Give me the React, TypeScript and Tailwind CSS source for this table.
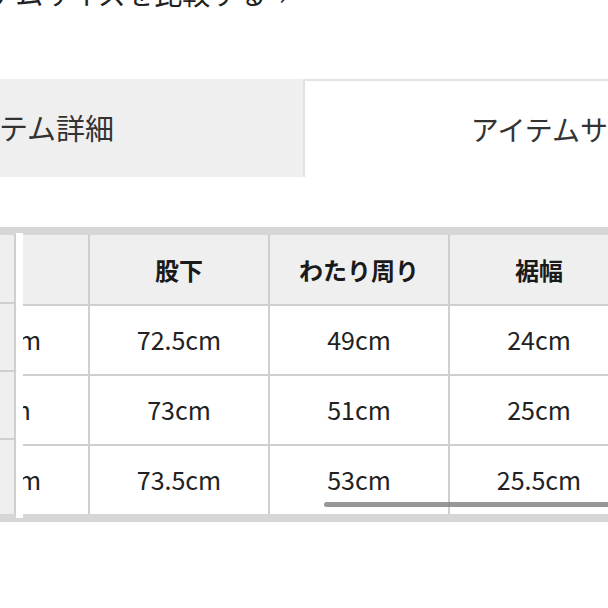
import React from 'react';

const cols = ['股上', '股下', 'わたり周り', '裾幅'];
const rows = [
    ['40.5cm', '72.5cm', '49cm', '24cm'],
    ['41cm', '73cm', '51cm', '25cm'],
    ['42.5cm', '73.5cm', '53cm', '25.5cm'],
];

export default function App() {
    return (
        <div className="w-[608px] h-[608px] overflow-hidden bg-white text-[#222]" style={{ fontFamily: '"Noto Sans CJK JP", "Noto Sans", sans-serif' }}>

            {/* Compare link (cut off at top) */}
            <p className="-mt-[21px] -ml-[66px] h-[28px] text-[28px] leading-[28px] whitespace-nowrap">アイテムサイズを比較する&nbsp;&nbsp;›</p>

            {/* Tabs */}
            <div className="mt-[72px] -ml-[236px] flex w-[1084px] h-[98px] text-[28px] text-[#333]">
                <div className="w-[541px] shrink-0 bg-[#efefef] border-r-2 border-[#e2e2e2] pr-[10px] text-[29px] flex items-center justify-center">アイテム詳細</div>
                <div className="w-[540px] shrink-0 border-t-2 border-[#e4e4e4] pr-[16px] flex items-center justify-center">アイテムサイズ</div>
            </div>

            {/* Size table */}
            <div className="mt-[50px] relative border-y-8 border-[#d6d6d6]">
                <div className="flex">
                    {/* Frozen column, mostly scrolled off */}
                    <div className="w-[16px] shrink-0 bg-[#efefef] border-r-2 border-[#cfcfcf]">
                        <div className="h-[69px] border-b-2 border-[#cfcfcf]" />
                        <div className="h-[68px] border-b-2 border-[#cfcfcf]" />
                        <div className="h-[68px] border-b-2 border-[#cfcfcf]" />
                        <div className="h-[68px]" />
                    </div>

                    <div className="flex-1 overflow-hidden">
                        <div className="-ml-[106px] w-[720px]">
                            <div className="flex h-[71px] bg-[#efefef] border-b-2 border-[#cfcfcf] font-bold text-[24px] text-[#1a1a1a]">
                                {cols.map((c) => (
                                    <div key={c} className="w-[180px] shrink-0 border-r-2 border-[#cfcfcf] flex items-center justify-center">{c}</div>
                                ))}
                            </div>
                            {rows.map((r, i) => (
                                <div key={i} className={i < rows.length - 1 ? 'flex h-[70px] border-b-2 border-[#cfcfcf] text-[25px]' : 'flex h-[68px] text-[25px]'}>
                                    {r.map((v, j) => (
                                        <div key={j} className="w-[180px] shrink-0 border-r-2 border-[#cfcfcf] flex items-center justify-center">{v}</div>
                                    ))}
                                </div>
                            ))}
                        </div>
                    </div>
                </div>

                {/* sticky column edge */}
                <div className="absolute left-[16px] top-[-2px] bottom-[-4px] w-[7px] bg-white" />

                {/* horizontal scrollbar */}
                <div className="absolute left-[324px] top-[267px] w-[320px] h-[5px] rounded-full bg-[#7d7d7d]/80" />
            </div>
        </div>
    );
}
